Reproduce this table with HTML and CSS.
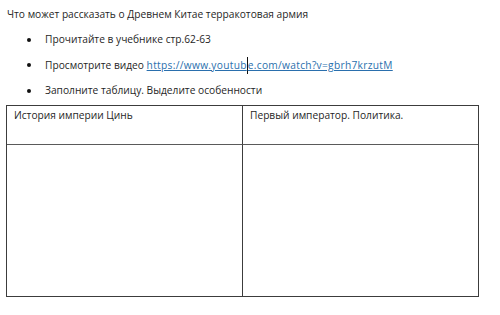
FILE: index.html
```html
<!DOCTYPE html>
<html>
<head>
<meta charset="utf-8">
<link rel="stylesheet" href="styles.css">
</head>
<body>
<div class="page">
  <p class="title">Что может рассказать о Древнем Китае терракотовая армия</p>
  <ul class="tasks">
    <li>Прочитайте в учебнике стр.62-63</li>
    <li>Просмотрите видео <a class="link" href="#">https://www.youtub<span class="caret"></span>e.com/watch?v=gbrh7krzutM</a></li>
    <li>Заполните таблицу. Выделите особенности</li>
  </ul>
  <div class="grid">
    <div class="cell head">История империи Цинь</div>
    <div class="cell head right">Первый император. Политика.</div>
    <div class="cell body"></div>
    <div class="cell body right"></div>
  </div>
</div>
</body>
</html>
```
FILE: styles.css
```css
html, body {
  margin: 0;
  padding: 0;
  background: #fff;
}
.page {
  font-family: "Open Sans", "Noto Sans", sans-serif;
  font-size: 10.2px;
  color: #1f1f1f;
  padding: 7px 0 0 6px;
  width: 473px;
}
.title {
  margin: 0 0 0 1px;
  line-height: 15px;
}
.tasks {
  list-style: none;
  margin: 10px 0 0 0;
  padding: 0;
}
.tasks li {
  position: relative;
  padding-left: 39px;
  line-height: 15px;
  margin-bottom: 9.5px;
}
.tasks li::before {
  content: "";
  position: absolute;
  left: 21px;
  top: 6px;
  width: 4px;
  height: 4px;
  border-radius: 50%;
  background: #111;
}
.link {
  color: #2a6fad;
  text-decoration: underline;
  letter-spacing: 0.3px;
}
.caret {
  display: inline-block;
  width: 1px;
  height: 17px;
  background: #111;
  vertical-align: -5px;
}
.grid {
  display: grid;
  grid-template-columns: 235px 236px;
  grid-template-rows: 38px 152px;
  border: 1px solid #3c3c3c;
  margin-top: -3px;
}
.cell {
  padding: 2px 7px;
  line-height: 14px;
}
.right {
  border-left: 1px solid #3c3c3c;
}
.body {
  border-top: 1px solid #5a5a5a;
}
```
